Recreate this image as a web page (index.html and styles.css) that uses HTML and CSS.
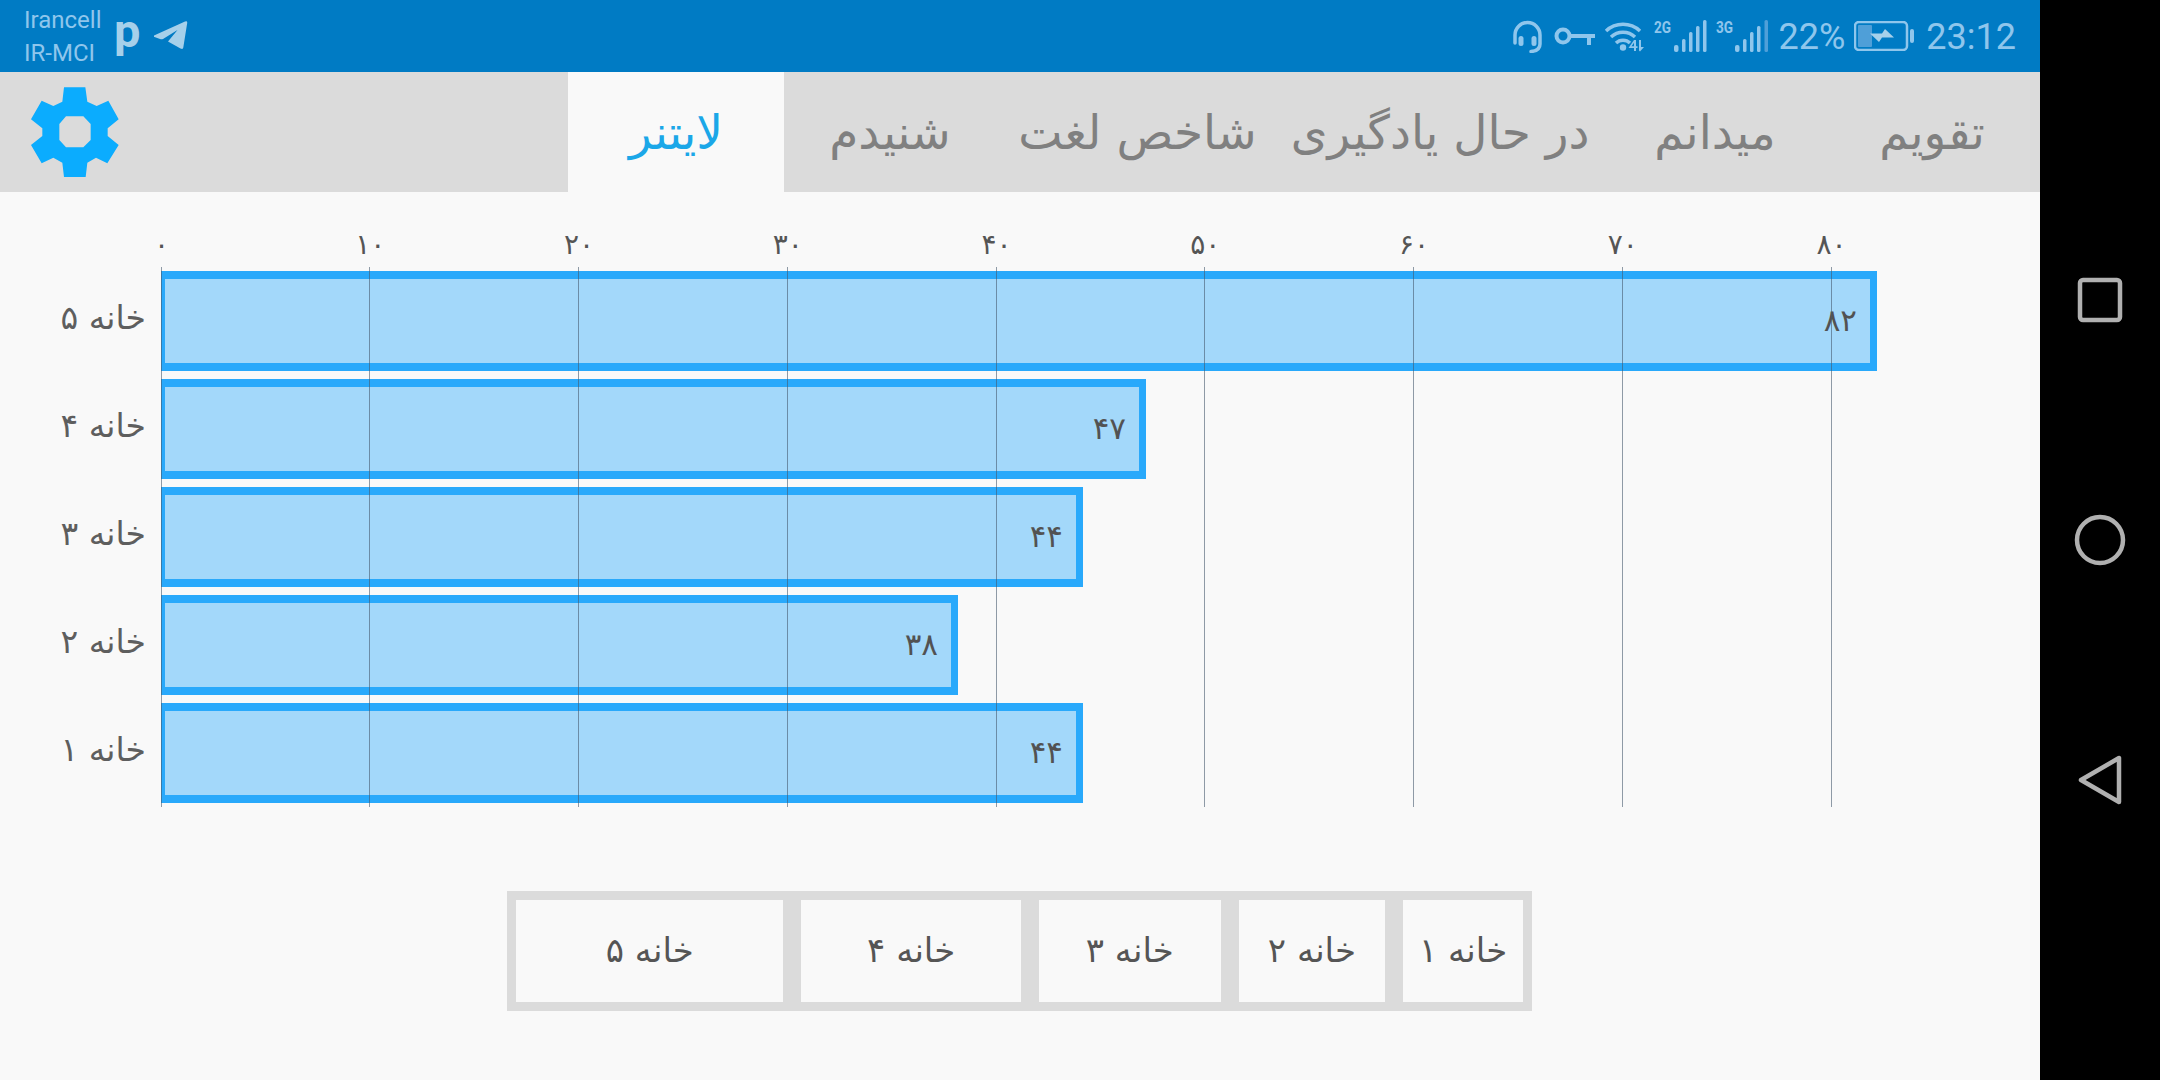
FILE: index.html
```html
<!DOCTYPE html>
<html lang="fa">
<head>
    <meta charset="UTF-8">
    <title>لایتنر</title>
    <link rel="stylesheet" href="styles.css">
</head>
<body>
<div class="device">
    <div class="screen">
        <!--status bar-->
        <div class="status">
            <div class="status-left">
                <div class="carrier">
                    <span>Irancell</span>
                    <span>IR-MCI</span>
                </div>
                <span class="p-icon">p</span>
                <svg class="plane" width="34" height="30" viewBox="0 0 34 30"><path d="M0 15.500 L31 1.500 Q33.500 .5 33.200 3 L29.300 27.500 Q29 29.800 26.500 28.500 L14 21.500 L23.500 10 L9 19 Q7.500 19.500 6 19 L.5 17 Q-.8 16.300 0 15.500Z"/></svg>
            </div>
            <div class="status-right">
                <svg class="headset" width="31" height="33" viewBox="0 0 31 33"><path d="M3 23V15a12.500 12.500 0 0 1 25 0v9c0 4-3 7-9 7.500"/><rect class="solid" x="6.500" y="16" width="5" height="10" rx="2.500"/><rect class="solid" x="19.500" y="16" width="5" height="10" rx="2.500"/></svg>
                <svg class="gap-key" width="41" height="20" viewBox="0 0 41 20"><circle class="key-ring" cx="9" cy="10" r="6.500"/><path class="solid" d="M15 8h26v4h-4v7h-4v-7H15z"/></svg>
                <svg class="gap-wifi" width="41" height="32" viewBox="0 0 41 32"><path class="arc" d="M2 11a25 25 0 0 1 34 0M7 17a17.500 17.500 0 0 1 24 0M12 23a10 10 0 0 1 14 0"/><circle class="solid" cx="19" cy="27.500" r="3.200"/><path class="solid" d="M30 20l-5.500 8h5.500v3h2v-3h1.500v-1.800H32V20zM30 26.200h-2.500l2.500-3.500zM35 20h2v7h3l-4 4.500-1-1z"/></svg>
                <div class="signal gap-sig">
                    <span class="net">2G</span>
                    <svg width="35" height="32" viewBox="0 0 35 32"><rect class="solid" x="1" y="25" width="4.500" height="7" rx="2"/><rect class="solid" x="9" y="19" width="3.500" height="13" rx="1.500"/><rect class="solid" x="16" y="12" width="3.500" height="20" rx="1.500"/><rect class="solid" x="23" y="6" width="3.500" height="26" rx="1.500"/><rect class="solid" x="30" y="0" width="3.500" height="32" rx="1.500"/></svg>
                </div>
                <div class="signal gap-sig2">
                    <span class="net">3G</span>
                    <svg width="34" height="32" viewBox="0 0 34 32"><rect class="solid" x="0" y="25" width="4.500" height="7" rx="2"/><rect class="solid" x="8" y="19" width="3.500" height="13" rx="1.500"/><rect class="solid" x="15" y="12" width="3.500" height="20" rx="1.500"/><rect class="solid" x="22" y="6" width="3.500" height="26" rx="1.500"/><rect class="faint" x="29.500" y="0" width="3.500" height="32" rx="1.500"/></svg>
                </div>
                <span class="pct">22%</span>
                <svg class="gap-bat" width="60" height="30" viewBox="0 0 60 30"><rect class="bat-body" x="1" y="1" width="52" height="28" rx="4"/><rect class="faint" x="4" y="4" width="14" height="22" rx="1"/><path class="bolt" d="M16 12.500H28L31 8 40 16.500H28L25 21Z"/><rect class="solid" x="56" y="8" width="4" height="14" rx="2"/></svg>
                <span class="clock">23:12</span>
            </div>
        </div>

        <!--tabs-->
        <div class="tabs" dir="rtl">
            <div class="tab">تقویم</div>
            <div class="tab">میدانم</div>
            <div class="tab">در حال یادگیری</div>
            <div class="tab">شاخص لغت</div>
            <div class="tab">شنیدم</div>
            <div class="tab active">لایتنر</div>
            <div class="gear-cell">
                <svg class="gear" width="90" height="92" viewBox="90 258 270 276"><path fill-rule="evenodd" d="M192 262H256L262 305 290 318 325 302 356 358 323 385V408L356 435 322 490 288 473 262 488 257 531H192L187 488 160 473 125 490 93 435 127 408V385L93 358 125 302 160 318 187 305ZM198 349 178 372V420L198 442H250L272 420V372L250 349Z"/></svg>
            </div>
        </div>

        <!--chart-->
        <div class="chart">
            <div class="axis">
                <span class="tick">۰</span>
                <span class="tick">۱۰</span>
                <span class="tick">۲۰</span>
                <span class="tick">۳۰</span>
                <span class="tick">۴۰</span>
                <span class="tick">۵۰</span>
                <span class="tick">۶۰</span>
                <span class="tick">۷۰</span>
                <span class="tick">۸۰</span>
            </div>
            <div class="plot">
                <div class="row">
                    <div class="row-label" dir="rtl">خانه ۵</div>
                    <div class="bar" style="width:1716px"><span>۸۲</span></div>
                </div>
                <div class="row">
                    <div class="row-label" dir="rtl">خانه ۴</div>
                    <div class="bar" style="width:985px"><span>۴۷</span></div>
                </div>
                <div class="row">
                    <div class="row-label" dir="rtl">خانه ۳</div>
                    <div class="bar" style="width:922px"><span>۴۴</span></div>
                </div>
                <div class="row">
                    <div class="row-label" dir="rtl">خانه ۲</div>
                    <div class="bar" style="width:797px"><span>۳۸</span></div>
                </div>
                <div class="row">
                    <div class="row-label" dir="rtl">خانه ۱</div>
                    <div class="bar" style="width:922px"><span>۴۴</span></div>
                </div>
                <!--grid lines sit over the bars-->
                <div class="grid">
                    <i></i><i></i><i></i><i></i><i></i><i></i><i></i><i></i><i></i>
                </div>
            </div>
        </div>

        <!--legend-->
        <div class="legend" dir="rtl">
            <div class="cell c1">خانه ۱</div>
            <div class="cell c2">خانه ۲</div>
            <div class="cell c3">خانه ۳</div>
            <div class="cell c4">خانه ۴</div>
            <div class="cell c5">خانه ۵</div>
        </div>
    </div>

    <!--navigation keys-->
    <div class="nav">
        <svg width="48" height="48" viewBox="0 0 48 48"><rect x="4" y="4" width="40" height="40" rx="3"/></svg>
        <svg width="54" height="54" viewBox="0 0 54 54"><circle cx="27" cy="27" r="23"/></svg>
        <svg class="back" width="48" height="54" viewBox="0 0 48 54"><path d="M43 5 V49 L5 27Z"/></svg>
    </div>
</div>
</body>
</html>
```
FILE: styles.css
```css
* {
    margin: 0;
    padding: 0;
    box-sizing: border-box;
}

body {
    width: 2160px;
    height: 1080px;
    overflow: hidden;
    font-family: "DejaVu Sans", "Noto Sans", sans-serif;
    background: #000;
}

.device {
    display: flex;
    width: 2160px;
    height: 1080px;
}

.screen {
    width: 2040px;
    height: 1080px;
    background: #f9f9f9;
}

/*status bar*/
.status {
    height: 72px;
    background: #007bc4;
    color: #8fc6ec;
    font-family: Roboto, sans-serif;
    display: flex;
    justify-content: space-between;
    align-items: center;
    padding: 0 24px 0 24px;
}

.status svg {
    display: block;
    flex: none;
}

.status-left {
    display: flex;
    align-items: center;
}

.carrier {
    display: flex;
    flex-direction: column;
    font-size: 24px;
    line-height: 33px;
    width: 90px;
    padding-top: 2px;
}

.p-icon {
    font-size: 47px;
    font-weight: 700;
    line-height: 40px;
    color: #a6d0ea;
    margin-top: -10px;
    width: 40px;
}

.plane {
    fill: #a6d0ea;
    margin-top: -2px;
}

.status-right {
    display: flex;
    align-items: center;
}

.solid {
    fill: #8fc6ec;
    stroke: none;
}

.faint {
    fill: #4f9fd8;
    stroke: none;
}

.headset path {
    fill: none;
    stroke: #8fc6ec;
    stroke-width: 3.5;
    stroke-linecap: round;
}

.key-ring {
    fill: none;
    stroke: #8fc6ec;
    stroke-width: 4;
}

.arc {
    fill: none;
    stroke: #8fc6ec;
    stroke-width: 3.5;
}

.gap-key {
    margin-left: 11px;
}

.gap-wifi {
    margin-left: 9px;
}

.signal {
    display: flex;
    align-items: flex-start;
    height: 32px;
}

.gap-sig {
    margin-left: 9px;
}

.gap-sig2 {
    margin-left: 8px;
}

.net {
    font-size: 17px;
    font-weight: 700;
    line-height: 15px;
    width: 19px;
    transform: scaleX(.8);
    transform-origin: left top;
}

.pct,
.clock {
    font-size: 36px;
    font-weight: 400;
    line-height: 36px;
    padding-top: 2px;
}

.pct {
    margin-left: 10px;
}

.gap-bat {
    margin-left: 9px;
}

.bat-body {
    fill: none;
    stroke: #8fc6ec;
    stroke-width: 2.5;
}

.bolt {
    fill: #a6d0ea;
}

.clock {
    margin-left: 12px;
}

/*tabs*/
.tabs {
    height: 120px;
    background: #dbdbdb;
    display: grid;
    grid-template-columns: 206px 228px 322px 283px 212px 216px 1fr;
    padding-right: 5px;
}

.tab {
    display: flex;
    align-items: center;
    justify-content: center;
    font-size: 47px;
    color: #808080;
    white-space: nowrap;
}

.tab.active {
    background: #f9f9f9;
    color: #1ba7e8;
}

.gear-cell {
    display: flex;
    align-items: center;
    justify-content: flex-end;
    padding-left: 30px;
}

.gear {
    fill: #0bacfe;
    display: block;
}

/*chart*/
.chart {
    padding-top: 31px;
}

.axis {
    width: 1671px;
    margin-left: 161px;
    height: 44px;
    display: flex;
    justify-content: space-between;
}

.tick {
    width: 1px;
    display: flex;
    justify-content: center;
    font-size: 28px;
    line-height: 44px;
    color: #555;
}

.plot {
    position: relative;
    display: flex;
    flex-direction: column;
    gap: 8px;
    padding: 4px 0;
}

.row {
    display: flex;
    align-items: center;
    height: 100px;
}

.row-label {
    width: 146px;
    margin-right: 15px;
    padding-bottom: 8px;
    font-size: 33px;
    color: #5e5e5e;
    white-space: nowrap;
}

.bar {
    height: 100px;
    background: #a3d8fa;
    border: 8px solid #29a9fb;
    border-right-width: 7px;
    border-left-width: 4px;
    display: flex;
    align-items: center;
    justify-content: flex-end;
    padding-right: 13px;
    font-size: 31px;
    color: #525252;
}

.bar span {
    padding-bottom: 2px;
}

.grid {
    position: absolute;
    left: 160.5px;
    top: 0;
    bottom: 0;
    width: 1671px;
    display: flex;
    justify-content: space-between;
}

.grid i {
    width: 1px;
    background: rgba(70, 90, 110, .6);
}

/*legend*/
.legend {
    width: 1025px;
    height: 120px;
    margin: 84px 0 0 507px;
    background: #dbdbdb;
    padding: 9px;
    display: flex;
    gap: 18px;
}

.cell {
    background: #f9f9f9;
    display: flex;
    align-items: center;
    justify-content: center;
    padding-bottom: 2px;
    font-size: 34px;
    color: #555;
    white-space: nowrap;
}

.c1 { width: 120px; }
.c2 { width: 147px; }
.c3 { width: 182px; }
.c4 { width: 220px; }
.c5 { width: 268px; }

/*navigation keys*/
.nav {
    width: 120px;
    height: 1080px;
    background: #000;
    display: flex;
    flex-direction: column;
    align-items: center;
    gap: 189px;
    padding-top: 276px;
}

.nav svg {
    display: block;
    flex: none;
    fill: none;
    stroke: #b0b0b0;
    stroke-width: 4.500;
    stroke-linejoin: round;
}

.nav .back {
    margin-top: -3px;
}
```
